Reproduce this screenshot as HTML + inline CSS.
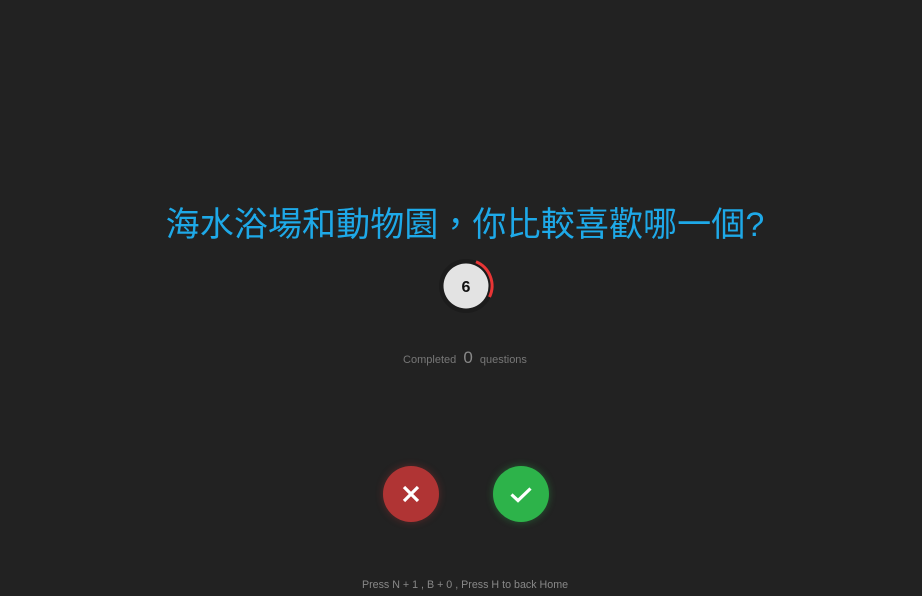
<!DOCTYPE html>
<html><head><meta charset="utf-8"><style>
html,body{margin:0;width:922px;height:596px;background:#222222;overflow:hidden;font-family:"Liberation Sans","Noto Sans CJK TC",sans-serif;}
.t{position:absolute;left:0;width:922px;text-align:center;}
h1{position:absolute;left:4px;width:922px;top:201px;margin:0;text-align:center;font-weight:400;font-size:34px;line-height:48px;color:#1ea9e8;font-family:"Liberation Sans","Noto Sans CJK TC",sans-serif;letter-spacing:0.1px}
.btn{position:absolute;width:56px;height:56px;border-radius:50%;top:466px}
</style></head><body>
<h1>海水浴場和動物園，你比較喜歡哪一個?</h1>
<svg style="position:absolute;left:436px;top:256px" width="60" height="60" viewBox="0 0 60 60">
<circle cx="30" cy="30" r="27" fill="#1c1c1c"/>
<circle cx="30" cy="30" r="22.5" fill="#e3e3e3"/>
<path d="M40 5.8 A26 26 0 0 1 53.5 41" fill="none" stroke="#e83535" stroke-width="3"/>
<text x="30" y="36" text-anchor="middle" font-size="16" font-weight="bold" fill="#111" font-family="Liberation Sans">6</text>
</svg>
<div class="t" style="top:348px;left:4px;font-size:11px;color:#777">Completed <span style="font-size:17px;color:#888;margin:0 4px">0</span> questions</div>
<div class="btn" style="left:383px;background:#b03434;box-shadow:0 0 8px rgba(176,52,52,.4)">
<svg width="56" height="56"><path d="M21 21 L35 35 M35 21 L21 35" stroke="#fff" stroke-width="3.2"/></svg></div>
<div class="btn" style="left:493px;background:#2db34a;box-shadow:0 0 8px rgba(45,179,74,.4)">
<svg width="56" height="56"><path d="M18.5 28.5 L25 34.5 L37.5 22.5" stroke="#fff" stroke-width="3.2" fill="none"/></svg></div>
<div class="t" style="top:579px;left:4px;font-size:10.7px;color:#888">Press N + 1 , B + 0 , Press H to back Home</div>
</body></html>
